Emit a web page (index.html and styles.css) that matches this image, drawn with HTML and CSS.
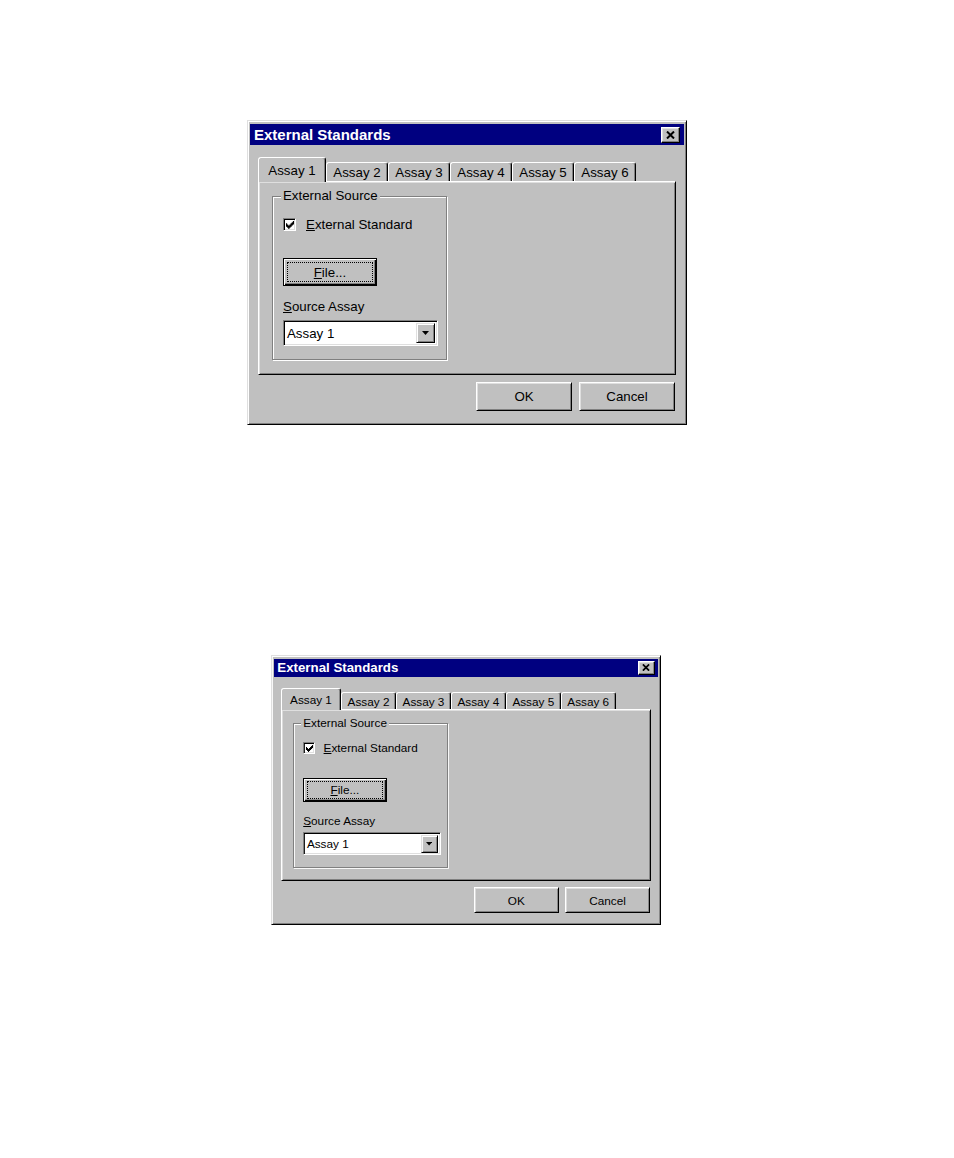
FILE: index.html
```html
<!DOCTYPE html>
<html lang="en">
<head>
<meta charset="utf-8">
<title>External Standards</title>
<link rel="stylesheet" href="styles.css">
</head>
<body>
<div class="page">
  <div class="dialog d1">
    <div class="titlebar">
      <span class="title">External Standards</span>
      <span class="close"><svg width="9" height="8" viewBox="0 0 9 8"><path d="M1 0.5 L8 7.5 M8 0.5 L1 7.5" stroke="#000" stroke-width="2" fill="none"/></svg></span>
    </div>
    <div class="tabs">
      <div class="tab selected">Assay 1</div>
      <div class="tab">Assay 2</div>
      <div class="tab">Assay 3</div>
      <div class="tab">Assay 4</div>
      <div class="tab">Assay 5</div>
      <div class="tab">Assay 6</div>
    </div>
    <div class="panel">
      <div class="group">
        <div class="legend">External Source</div>
        <div class="check-row">
          <span class="checkbox"><svg width="8" height="8" viewBox="0 0 7 7"><path d="M6 0 H7 V3 H6 V4 H5 V5 H4 V6 H3 V7 H2 V6 H1 V5 H0 V2 H1 V3 H2 V4 H3 V3 H4 V2 H5 V1 H6 Z" fill="#000"/></svg></span>
          <span><u>E</u>xternal Standard</span>
        </div>
        <div class="btn-default"><span class="focus"><u>F</u>ile...</span></div>
        <div class="label"><u>S</u>ource Assay</div>
        <div class="combo">
          <span class="combo-text">Assay 1</span>
          <span class="drop"><svg width="7" height="4" viewBox="0 0 7 4"><path d="M0 0 H7 L3.5 4 Z" fill="#000"/></svg></span>
        </div>
      </div>
    </div>
    <div class="actions">
      <div class="btn">OK</div>
      <div class="btn">Cancel</div>
    </div>
  </div>

  <div class="wrap2">
    <div class="dialog d2">
      <div class="titlebar">
        <span class="title">External Standards</span>
        <span class="close"><svg width="9" height="8" viewBox="0 0 9 8"><path d="M1 0.5 L8 7.5 M8 0.5 L1 7.5" stroke="#000" stroke-width="2" fill="none"/></svg></span>
      </div>
      <div class="tabs">
        <div class="tab selected">Assay 1</div>
        <div class="tab">Assay 2</div>
        <div class="tab">Assay 3</div>
        <div class="tab">Assay 4</div>
        <div class="tab">Assay 5</div>
        <div class="tab">Assay 6</div>
      </div>
      <div class="panel">
        <div class="group">
          <div class="legend">External Source</div>
          <div class="check-row">
            <span class="checkbox"><svg width="8" height="8" viewBox="0 0 7 7"><path d="M6 0 H7 V3 H6 V4 H5 V5 H4 V6 H3 V7 H2 V6 H1 V5 H0 V2 H1 V3 H2 V4 H3 V3 H4 V2 H5 V1 H6 Z" fill="#000"/></svg></span>
            <span><u>E</u>xternal Standard</span>
          </div>
          <div class="btn-default"><span class="focus"><u>F</u>ile...</span></div>
          <div class="label"><u>S</u>ource Assay</div>
          <div class="combo">
            <span class="combo-text">Assay 1</span>
            <span class="drop"><svg width="7" height="4" viewBox="0 0 7 4"><path d="M0 0 H7 L3.5 4 Z" fill="#000"/></svg></span>
          </div>
        </div>
      </div>
      <div class="actions">
        <div class="btn">OK</div>
        <div class="btn">Cancel</div>
      </div>
    </div>
  </div>
</div>
</body>
</html>
```

FILE: styles.css
```css
html, body {
  margin: 0;
  background: #fff;
}
body {
  font-family: "Liberation Sans", Arial, sans-serif;
  color: #000;
}
.page {
  padding-top: 120px;
}
.d1 {
  margin-left: 247px;
}
.wrap2 {
  margin-top: 230px;
  padding-left: 271px;
}
.d2 {
  zoom: 0.886;
}

.dialog {
  width: 440px;
  height: 305px;
  box-sizing: border-box;
  background: #c0c0c0;
  border: 1px solid;
  border-color: #dfdfdf #000 #000 #dfdfdf;
  box-shadow: inset 1px 1px 0 #fff, inset -1px -1px 0 #808080;
  padding: 3px 2px 2px;
  display: flex;
  flex-direction: column;
  font-size: 13.3px;
}

.titlebar {
  flex: none;
  height: 21px;
  background: #000080;
  display: flex;
  align-items: center;
  justify-content: space-between;
  padding: 0 4px;
}
.title {
  color: #fff;
  font-weight: bold;
  font-size: 15px;
}
.close {
  width: 19px;
  height: 16px;
  box-sizing: border-box;
  background: #c0c0c0;
  border: 1px solid;
  border-color: #fff #000 #000 #fff;
  box-shadow: inset -1px -1px 0 #808080, inset 1px 1px 0 #dfdfdf;
  display: flex;
  align-items: center;
  justify-content: center;
}

.tabs {
  flex: none;
  display: flex;
  align-items: flex-end;
  height: 24px;
  margin: 12px 8px 0;
  position: relative;
  z-index: 1;
}
.tab {
  width: 62px;
  height: 19px;
  box-sizing: border-box;
  background: #c0c0c0;
  border: 1px solid;
  border-bottom: none;
  border-color: #fff #000 transparent #fff;
  border-radius: 3px 3px 0 0;
  box-shadow: inset -1px 0 0 #808080;
  display: flex;
  align-items: center;
  justify-content: center;
}
.tab.selected {
  width: 68px;
  height: 25px;
  margin-bottom: -1px;
}

.panel {
  flex: none;
  height: 194px;
  box-sizing: border-box;
  margin: 0 8px;
  border: 1px solid;
  border-color: #fff #000 #000 #fff;
  box-shadow: inset 1px 1px 0 #dfdfdf, inset -1px -1px 0 #808080;
  padding: 14px 0 0 13px;
}

.group {
  width: 175px;
  box-sizing: border-box;
  border: 1px solid #808080;
  box-shadow: inset 1px 1px 0 #fff, 1px 1px 0 #fff;
  padding: 0 0 13px 10px;
  display: flex;
  flex-direction: column;
  align-items: flex-start;
}
.legend {
  margin: -9px 0 0 -2px;
  padding: 0 2px;
  line-height: 16px;
  background: #c0c0c0;
}
.check-row {
  display: flex;
  align-items: center;
  gap: 10px;
  height: 15px;
  margin-top: 13px;
}
.checkbox {
  width: 13px;
  height: 13px;
  box-sizing: border-box;
  background: #fff;
  border: 1px solid;
  border-color: #808080 #fff #fff #808080;
  box-shadow: inset 1px 1px 0 #000, inset -1px -1px 0 #dfdfdf;
  display: flex;
  align-items: center;
  justify-content: center;
  padding: 1px 0 0 1px;
}
.checkbox svg {
  display: block;
}
.btn-default {
  margin-top: 26px;
  width: 94px;
  height: 28px;
  box-sizing: border-box;
  border: 1px solid #000;
  box-shadow: inset 1px 1px 0 #fff, inset -1px -1px 0 #000, inset -2px -2px 0 #808080;
  padding: 3px;
  display: flex;
}
.focus {
  flex: 1;
  border: 1px dotted #000;
  display: flex;
  align-items: center;
  justify-content: center;
}
.label {
  margin-top: 13px;
  line-height: 16px;
}
.combo {
  margin-top: 5px;
  width: 155px;
  height: 26px;
  box-sizing: border-box;
  background: #fff;
  border: 1px solid;
  border-color: #808080 #fff #fff #808080;
  box-shadow: inset 1px 1px 0 #000, inset -1px -1px 0 #dfdfdf;
  display: flex;
  align-items: center;
  padding: 1px 1px 1px 3px;
}
.combo-text {
  flex: 1;
}
.drop {
  width: 19px;
  height: 20px;
  margin: 1px;
  box-sizing: border-box;
  background: #c0c0c0;
  border: 1px solid;
  border-color: #dfdfdf #000 #000 #dfdfdf;
  box-shadow: inset 1px 1px 0 #fff, inset -1px -1px 0 #808080;
  display: flex;
  align-items: center;
  justify-content: center;
}
.drop svg {
  display: block;
}

.actions {
  flex: none;
  display: flex;
  justify-content: flex-end;
  gap: 7px;
  margin: 7px 9px 0 0;
}
.btn {
  width: 96px;
  height: 29px;
  box-sizing: border-box;
  border: 1px solid;
  border-color: #fff #000 #000 #fff;
  box-shadow: inset 1px 1px 0 #dfdfdf, inset -1px -1px 0 #808080;
  display: flex;
  align-items: center;
  justify-content: center;
}
u {
  text-underline-offset: 1px;
}
```
